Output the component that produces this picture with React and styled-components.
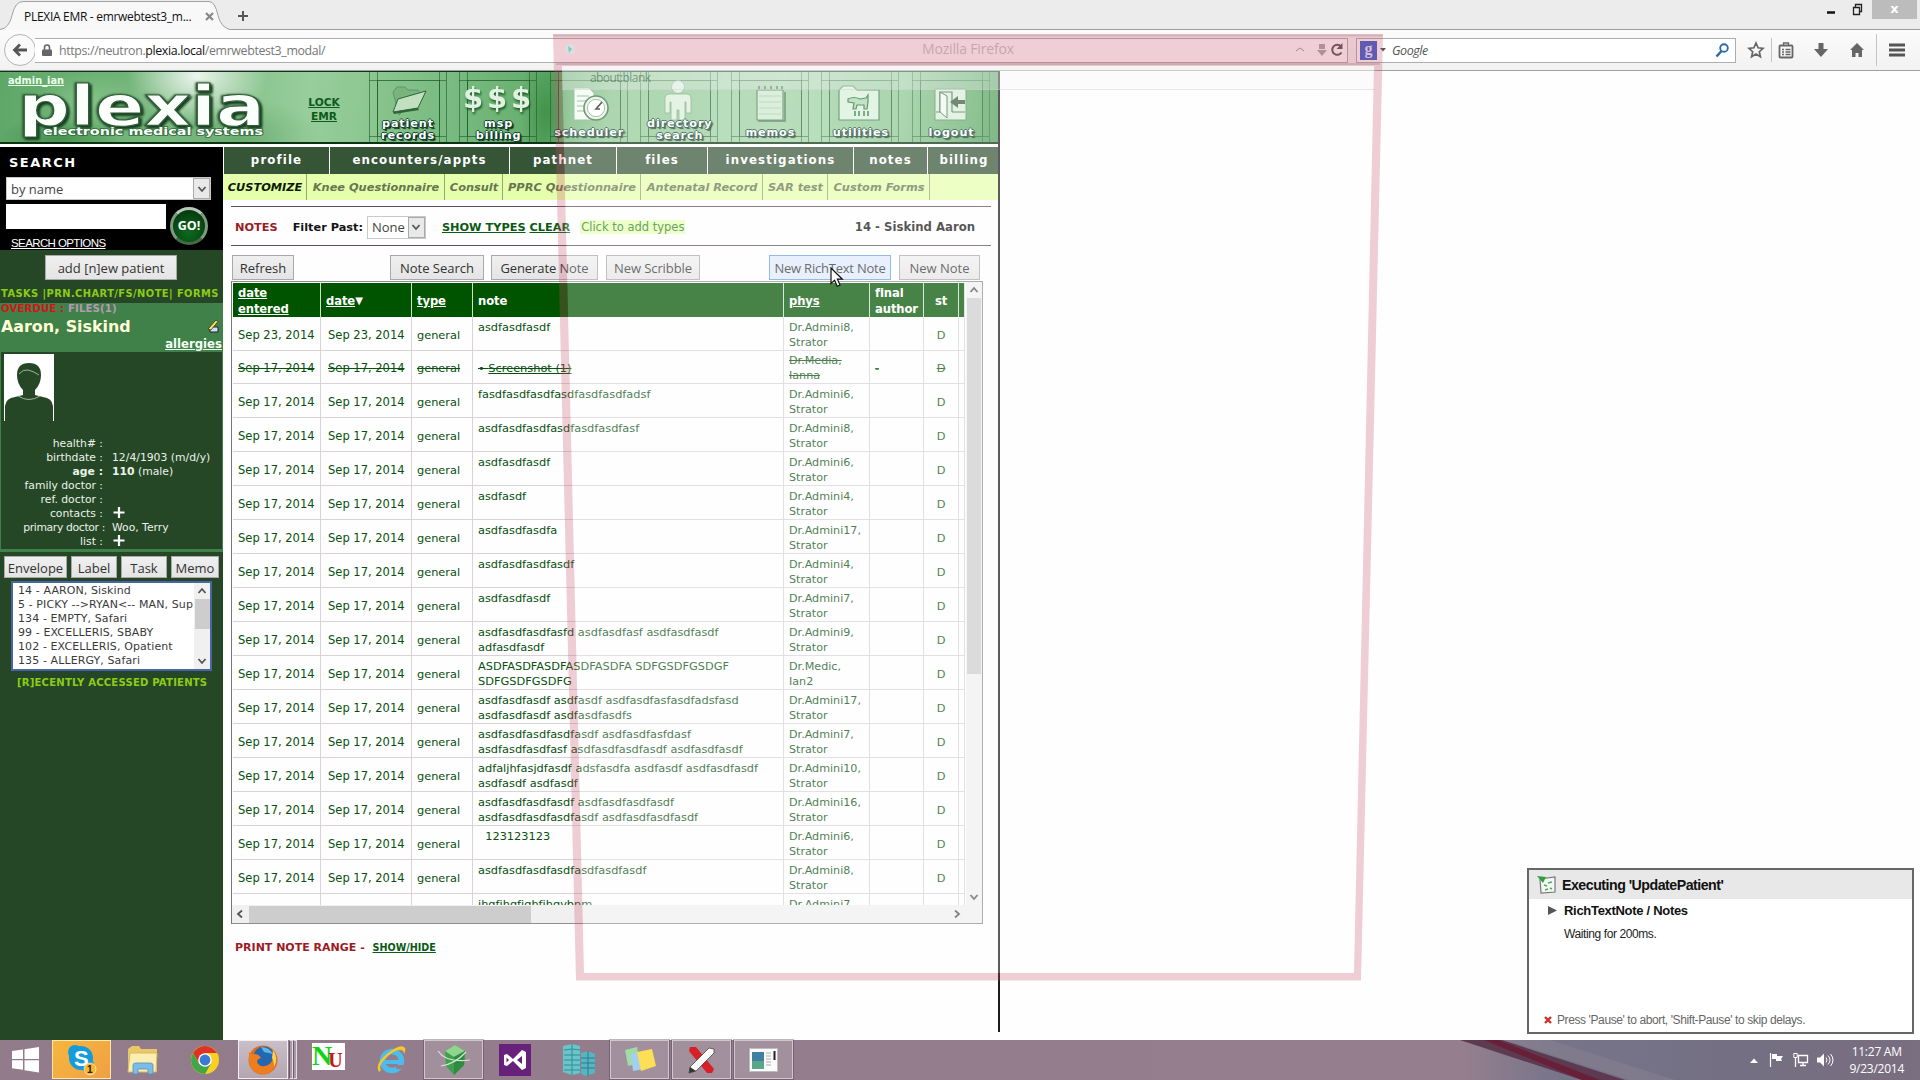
import React from "react";
import styled, { createGlobalStyle, css } from "styled-components";

const verdana = `"DejaVu Sans", Verdana, sans-serif`;
const segoe = `"Open Sans", "Segoe UI", sans-serif`;
const arial = `"Liberation Sans", Arial, sans-serif`;

const Global = createGlobalStyle`
  * { box-sizing: border-box; }
  html, body { margin: 0; padding: 0; background: #fff; }
  body { width: 1920px; height: 1080px; overflow: hidden; font-family: ${verdana}; }
`;

const Screen = styled.div`
  position: relative;
  width: 1920px;
  height: 1080px;
  display: flex;
  flex-direction: column;
  overflow: hidden;
  white-space: nowrap;
`;

/* ---------- browser chrome ---------- */
const TabStrip = styled.div`
  height: 30px;
  flex: none;
  display: flex;
  background: #ececec;
  border-bottom: 1px solid #9c9c9c;
`;
const TabShape = styled.div`
  position: relative;
  width: 236px;
  height: 30px;
  flex: none;
`;
const TabOutline = styled.svg`
  position: absolute;
  inset: 0;
`;
const TabContent = styled.div`
  position: relative;
  display: flex;
  align-items: center;
  height: 32px;
  padding-left: 24px;
  font: 12px ${segoe};
  letter-spacing: -0.3px;
  color: #111;
  svg { margin-left: 14px; }
`;
const NewTab = styled.svg`
  margin: 10px 0 0 1px;
`;
const WindowControls = styled.div`
  margin-left: auto;
  display: flex;
  align-items: flex-start;
  padding-right: 3px;
  svg { margin-top: 3px; }
`;
const CloseButton = styled.div`
  width: 45px;
  height: 19px;
  margin-left: 9px;
  background: #bcbcbc;
  color: #fff;
  font: bold 13px/17px ${verdana};
  text-align: center;
`;
const Toolbar = styled.div`
  height: 41px;
  flex: none;
  display: flex;
  align-items: center;
  padding: 0 12px 0 4px;
  background: linear-gradient(#fbfbfb, #f2f2f2);
  border-bottom: 1px solid #a0a0a0;
`;
const BackButton = styled.div`
  width: 32px;
  height: 32px;
  flex: none;
  display: flex;
  align-items: center;
  justify-content: center;
  border: 1px solid #b5b5b5;
  border-radius: 50%;
  background: #fafafa;
`;
const AddressBar = styled.div`
  flex: none;
  width: 1313px;
  height: 25px;
  margin-left: -1px;
  display: flex;
  align-items: center;
  padding: 0 3px 0 7px;
  border: 1px solid #adadad;
  border-left: 0;
  background: #fff;
  font: 12.4px ${segoe};
  color: #777;
  b { color: #111; font-weight: 400; }
  span { margin-left: 7px; letter-spacing: -0.37px; }
`;
const AddressTools = styled.div`
  margin-left: auto;
  display: flex;
  align-items: center;
  gap: 3px;
  svg:first-child { margin-right: 9px; }
`;
const SearchField = styled.div`
  width: 380px;
  height: 25px;
  flex: none;
  margin-left: 8px;
  display: flex;
  align-items: center;
  padding: 0 5px 0 3px;
  border: 1px solid #adadad;
  background: #fff;
  i { font: italic 12.5px ${segoe}; letter-spacing: -0.45px; color: #555; margin-left: 5px; flex: 1; }
`;
const EngineBadge = styled.div`
  width: 17px;
  height: 19px;
  margin-right: 3px;
  background: #3760d0;
  color: #dfe6ff;
  font: bold 16px/15px "Liberation Serif", serif;
  text-align: center;
`;
const ToolIcon = styled.svg`
  flex: none;
  margin-left: ${(p) => p.$ml}px;
`;
const Divider = styled.div`
  width: 1px;
  height: ${(p) => p.$h}px;
  margin-left: ${(p) => p.$ml}px;
  background: #c4c4c4;
`;

/* ---------- page ---------- */
const Page = styled.div`
  height: 969px;
  flex: none;
  display: flex;
  background: #fefefe;
`;
const EmrFrame = styled.div`
  width: 1000px;
  height: 961px;
  display: flex;
  flex-direction: column;
  border-right: 2px solid #1c1c1c;
`;
const Banner = styled.header`
  height: 73px;
  flex: none;
  display: flex;
  overflow: hidden;
  border-top: 1px solid #10331a;
  border-bottom: 2px solid #0c3312;
  background:
    radial-gradient(ellipse 70px 50px at 197px 4px, rgba(255,255,255,.85), rgba(255,255,255,0)),
    radial-gradient(ellipse 60px 30px at 90px 30px, rgba(150,205,150,.6), rgba(150,205,150,0)),
    radial-gradient(ellipse 60px 22px at 60px 66px, rgba(40,120,50,.5), rgba(40,120,50,0)),
    radial-gradient(ellipse 80px 40px at 240px 66px, rgba(50,130,60,.35), rgba(50,130,60,0)),
    radial-gradient(ellipse 26px 60px at 545px 40px, rgba(30,120,40,.45), rgba(30,120,40,0)),
    linear-gradient(97deg, #5fa768 0%, #6fb376 12%, #84c089 22%, #98cd9c 31%, #8ac68f 38%, #72b67a 48%, #5fa968 55%, #8fc994 61%, #a6d6aa 78%, #8cc892 90%, #4f9e58 100%);
`;
const Logo = styled.div`
  position: relative;
  width: 296px;
  flex: none;
`;
const Wordmark = styled.text`
  font: bold 55px ${verdana};
  fill: #fbfffb;
  stroke: #345c3a;
  stroke-width: 1.2px;
  filter: drop-shadow(2px 2px 1px #16401f) drop-shadow(-1px 0 1px #2a5a33);
`;
const UserLink = styled.a`
  position: absolute;
  left: 8px;
  top: 3px;
  font: bold 9.8px ${verdana};
  color: #eaffea;
  text-decoration: underline;
`;
const LockLink = styled.a`
  width: 56px;
  flex: none;
  padding-top: 23px;
  margin-right: 16.500px;
  font: bold 10.6px/14px ${verdana};
  text-align: center;
  text-decoration: underline;
  color: #0d5a1a;
`;
const Tile = styled.a`
  position: relative;
  width: 90.6px;
  height: 70px;
  flex: none;
  > svg { display: block; }
`;
const TileCaption = styled.span`
  position: absolute;
  left: -6px;
  width: 91px;
  bottom: ${(p) => (p.$low ? 3 : 0)}px;
  font: bold 11.2px/12px ${verdana};
  letter-spacing: 0.9px;
  text-align: center;
  white-space: pre-line;
  color: #fff;
  text-shadow: 1px 1px 0 #143, -1px 0 0 #143, 1px 0 0 #143, 0 -1px 0 #143, 0 1px 0 #143, 2px 2px 1px #0a2a12;
`;
const Body = styled.div`
  flex: 1;
  min-height: 0;
  display: flex;
  margin-top: 3px;
`;

/* ---------- sidebar ---------- */
const Sidebar = styled.aside`
  width: 223px;
  height: 893px;
  flex: none;
  display: flex;
  flex-direction: column;
  background: #264726;
`;
const SearchBox = styled.section`
  height: 103px;
  padding: 8px 0 0 6px;
  background: #000;
  h2 { margin: 0 0 6px 3px; font: bold 13px/16px ${verdana}; letter-spacing: 1.5px; color: #fff; }
  a { display: block; margin: 6px 0 0 5px; font: 11.5px/16px ${arial}; letter-spacing: -0.6px; color: #fff; text-decoration: underline; }
`;
const Select = styled.div`
  width: ${(p) => p.$w}px;
  height: ${(p) => p.$h}px;
  flex: none;
  display: flex;
  align-items: center;
  justify-content: space-between;
  padding-left: 4px;
  border: 1px solid #c9c9c9;
  background: #fff;
  font: 13px ${segoe};
  color: #444;
`;
const SelectArrow = styled.div`
  width: 17px;
  height: 100%;
  display: flex;
  align-items: center;
  justify-content: center;
  border: 1px solid #aaa;
  background: #e9e9e9;
`;
const QueryRow = styled.div`
  display: flex;
  height: 25px;
  margin-top: 4px;
`;
const QueryInput = styled.div`
  width: 160px;
  height: 25px;
  background: #fff;
`;
const GoButton = styled.div`
  width: 38px;
  height: 38px;
  margin: 3px 0 0 4px;
  border-radius: 50%;
  border: 3px solid #7f9c80;
  border-top-color: #b9c9b9;
  border-bottom-color: #47684a;
  background: radial-gradient(circle at 50% 70%, #0d6a1e, #03300b);
  color: #fff;
  font: bold 12.5px/32px ${segoe};
  text-align: center;
`;
const Button = styled.button`
  width: ${(p) => p.$w}px;
  height: ${(p) => p.$h || 25}px;
  flex: none;
  padding: ${(p) => (p.$h ? 1 : 0)}px 0 0;
  margin-left: ${(p) => p.$ml || 0}px;
  border: 1px solid ${(p) => (p.$hot ? "#6da0dc" : "#a9a9a9")};
  background: ${(p) => (p.$hot ? "#dfeafc" : "linear-gradient(#f0f0f0, #e4e4e4)")};
  font: 13px ${segoe};
  letter-spacing: ${(p) => p.$ls || 0}px;
  color: #333;
  white-space: nowrap;
`;
const AddRow = styled.div`
  height: 36px;
  padding: 5px 0 0 45px;
`;
const QuickLinks = styled.div`
  height: 17px;
  padding: 1px 0 0 1px;
  font: bold 9.9px/14px ${verdana};
  letter-spacing: 0.43px;
  color: #8ccc18;
`;
const PatientCard = styled.section`
  height: 249px;
  border: 1px solid #3f8148;
  border-bottom-width: 3px;
  border-top: 0;
  display: flex;
  flex-direction: column;
`;
const PatientHead = styled.div`
  height: 49px;
  background: #3f8148;
`;
const Alerts = styled.div`
  height: 13px;
  font: bold 10.2px/11px ${verdana};
  letter-spacing: 0.1px;
  color: #d01818;
  span { color: #b49ab4; }
`;
const NameRow = styled.div`
  height: 20px;
  display: flex;
  justify-content: space-between;
  align-items: center;
  padding-right: 3px;
  font: bold 15.9px ${verdana};
  color: #ffffd8;
`;
const Allergies = styled.a`
  display: block;
  text-align: right;
  font: bold 11.7px/16px ${verdana};
  text-decoration: underline;
  color: #f4fff4;
`;
const Portrait = styled.svg`
  display: block;
  margin: 2px 0 15px 3px;
  flex: none;
`;
const Fields = styled.dl`
  margin: 0;
  display: grid;
  grid-template-columns: 102px 1fr;
  column-gap: 9px;
  grid-auto-rows: 14.1px;
  align-items: center;
  font: 10.8px ${verdana};
  color: #e9f2e9;
  dt { text-align: right; }
  dd { margin: 0; }
`;
const Label = styled.dt`
  font-weight: ${(p) => (p.$bold ? "bold" : "normal")};
  letter-spacing: ${(p) => (p.$tight ? "-0.35px" : "0")};
  transform: ${(p) => (p.$tight ? "translateX(2px)" : "none")};
`;
const ActionRow = styled.div`
  display: flex;
  gap: 4px;
  padding: 4px 0 0 4px;
`;
const RecentList = styled.div`
  width: 201px;
  height: 90px;
  margin: 3px 0 0 11px;
  display: flex;
  border: 2px solid #4a64a8;
  background: #fff;
  font: 11px/14px ${verdana};
  color: #3a3a3a;
`;
const RecentItems = styled.div`
  flex: 1;
  min-width: 0;
  padding: 1px 0 0 5px;
  letter-spacing: 0.1px;
  overflow: hidden;
`;
const VScroll = styled.div`
  width: ${(p) => p.$w}px;
  flex: none;
  display: flex;
  flex-direction: column;
  align-items: center;
  background: #f0f0f0;
  > svg { flex: none; margin: 3px 0; }
`;
const Thumb = styled.div`
  background: #cdcdcd;
  width: ${(p) => p.$w}px;
  height: ${(p) => p.$h}px;
  margin-left: ${(p) => p.$ml || 0}px;
`;
const Spacer = styled.div`
  flex: 1;
`;
const RecentLabel = styled.div`
  margin-top: 5px;
  padding-left: 17px;
  font: bold 10.1px/14px ${verdana};
  letter-spacing: 0.18px;
  color: #8ccc18;
`;

/* ---------- main column ---------- */
const Main = styled.main`
  flex: 1;
  min-width: 0;
  display: flex;
  flex-direction: column;
`;
const NavBar = styled.nav`
  height: 27px;
  flex: none;
  display: flex;
  background: #365536;
`;
const NavItem = styled.a`
  width: ${(p) => p.$w}px;
  flex: none;
  border-left: 1px solid #fff;
  font: bold 11.8px/27px ${verdana};
  letter-spacing: 1.1px;
  text-align: center;
  color: #fff;
`;
const SubNav = styled.nav`
  height: 26px;
  flex: none;
  display: flex;
  background: #e6ffad;
`;
const SubItem = styled.a`
  width: ${(p) => p.$w}px;
  flex: none;
  padding-left: 1px;
  border-right: 1px solid #97a573;
  font: italic bold 11.35px/27px ${verdana};
  text-align: center;
  color: ${(p) => (p.$active ? "#0b1a00" : "#66764f")};
`;
const FilterBar = styled.div`
  height: 40px;
  flex: none;
  margin: 6px 7px 0 8px;
  display: flex;
  align-items: center;
  padding: 2px 16px 0 4px;
  border-top: 1px solid #5c4f5e;
  border-bottom: 1px solid #5c4f5e;
  font: bold 11.3px ${verdana};
  color: #141414;
`;
const FilterLinks = styled.span`
  display: flex;
  gap: 4px;
  margin: 1px 0 0 16px;
  a { color: #0a5a14; text-decoration: underline; }
`;
const RedTitle = styled.span`
  color: #9c1b24;
  margin-right: ${(p) => p.$mr || 0}px;
`;
const FilterLabel = styled.span`
  margin: 1px 4px 0 0;
`;
const AddTypes = styled.span`
  margin-left: 10px;
  padding: 0 1px;
  font-size: 11.5px;
  font-weight: 400;
  color: #2e8018;
  background: #e6ffb8;
`;
const PatientTag = styled.span`
  margin-left: auto;
  font-size: 11.7px;
`;
const ButtonBar = styled.div`
  height: 35px;
  flex: none;
  display: flex;
  padding: 9px 0 0 9px;
`;
const TableFrame = styled.div`
  width: 752px;
  height: 643px;
  flex: none;
  margin-left: 8px;
  display: flex;
  flex-direction: column;
  border: 1px solid #8e8e8e;
  border-left-color: #777;
`;
const TableArea = styled.div`
  height: 623px;
  display: flex;
  justify-content: space-between;
`;
const TableClip = styled.div`
  width: 733px;
  overflow: hidden;
  padding: 1px 0 0 1px;
`;
const cols = "88px 91px 61px 311px 86px 54px 35px 6px";
const HeadRow = styled.div`
  display: grid;
  grid-template-columns: ${cols};
  height: 34px;
  background: #005400;
`;
const HeadCell = styled.div`
  display: flex;
  align-items: center;
  padding: 1px 0 0 5px;
  border-right: 1px solid #cfe0cf;
  font: bold 11.6px/16px ${verdana};
  letter-spacing: -0.1px;
  white-space: pre-line;
  color: #fff;
  text-decoration: ${(p) => (p.$link ? "underline" : "none")};
  ${(p) => p.$center && css`justify-content: center; padding: 1px 0 0;`}
`;
const Arrow = styled.span`
  font-size: 10px;
`;
const Row = styled.div`
  display: grid;
  grid-template-columns: ${cols};
  height: ${(p) => p.$h}px;
  border-bottom: 1px solid #d9d3d9;
  font: 11.35px/15px ${verdana};
  color: #08500f;
  text-decoration: ${(p) => (p.$struck ? "line-through" : "none")};
`;
const Cell = styled.div`
  display: flex;
  align-items: ${(p) => (p.$top ? "flex-start" : "center")};
  padding: 3px 0 0 ${(p) => p.$pl ?? 5}px;
  border-right: 1px solid #d9d3d9;
  white-space: pre-line;
  overflow: hidden;
  ${(p) => p.$date && css`font-size: 11.5px;`}
  ${(p) => p.$center && css`justify-content: center; padding-left: 0;`}
`;
const PhysCell = styled(Cell)`
  padding-top: ${(p) => (p.$raised ? 1 : 3)}px;
  font-size: 11.15px;
`;
const HScroll = styled.div`
  height: 18px;
  display: flex;
  align-items: center;
  background: #f0f0f0;
  padding: 0 20px 0 3px;
`;
const PrintRange = styled.div`
  margin: 16px 0 0 12px;
  font: bold 11px/16px ${verdana};
  a { margin-left: 4px; font-size: 9.6px; color: #0a5a14; text-decoration: underline; }
`;

/* ---------- fading popup ---------- */
const GhostWindow = styled.svg`
  position: absolute;
  left: 550px;
  top: 30px;
`;
const Pointer = styled.svg`
  position: absolute;
  left: 830px;
  top: 267px;
`;

/* ---------- status popup ---------- */
const Toast = styled.section`
  position: absolute;
  left: 1527px;
  top: 868px;
  width: 387px;
  height: 166px;
  display: flex;
  flex-direction: column;
  border: 2px solid #666;
  background: #fff;
  font: 12px ${arial};
  letter-spacing: -0.4px;
  color: #222;
`;
const ToastTitle = styled.div`
  height: 29px;
  display: flex;
  align-items: center;
  gap: 6px;
  padding-left: 8px;
  background: #e8e8e8;
  font: bold 14.2px ${arial};
  letter-spacing: -0.5px;
  color: #111;
`;
const ToastStep = styled.div`
  display: flex;
  align-items: center;
  height: 22px;
  gap: 7px;
  padding-left: 19px;
  font: bold 13px ${arial};
  letter-spacing: -0.3px;
  color: #111;
`;
const ToastText = styled.div`
  padding: 5px 0 0 35px;
  line-height: 16px;
`;
const ToastHint = styled.div`
  margin-top: auto;
  display: flex;
  align-items: center;
  gap: 5px;
  height: 24px;
  padding-left: 15px;
  letter-spacing: -0.4px;
  color: #666;
`;

/* ---------- taskbar ---------- */
const Taskbar = styled.footer`
  height: 40px;
  flex: none;
  display: flex;
  align-items: stretch;
  background: linear-gradient(90deg, #927c8b 0, #957f8e 1460px, #77748a 1560px, #746f82 1750px, #7a6e80 100%);
`;
const Backdrop = styled.svg`
  position: absolute;
  left: 1440px;
  top: 1040px;
`;
const TaskSlot = styled.div`
  width: ${(p) => p.$w}px;
  height: 39px;
  margin-right: ${(p) => p.$mr || 0}px;
  flex: none;
  display: flex;
  align-items: center;
  justify-content: center;
  ${(p) => p.$open && css`border: 1px solid #d2c6ce; background: rgba(255,255,255,.14); box-shadow: 0 0 0 1px rgba(70,50,65,.35);`}
  ${(p) => p.$active && css`border: 1px solid #f3eef2; background: linear-gradient(#c9bfc8, #b3a6b1);`}
  ${(p) => p.$alert && css`border: 1px solid #ffe7ae; background: linear-gradient(135deg, #f6b73c, #f0a045);`}
`;
const StackEdge = styled.div`
  width: 4px;
  height: 39px;
  margin-left: ${(p) => p.$ml || 0}px;
  border: 1px solid #e5dde3;
  border-left-color: #6b5a67;
  background: #a999a6;
`;
const NuBadge = styled.div`
  width: 33px;
  height: 27px;
  margin-bottom: 6px;
  display: flex;
  background: #fff;
  font: bold 28px/25px "Liberation Serif", serif;
  color: #0fd416;
  span { font-size: 20px; line-height: 35px; margin-left: -4px; color: #d01414; }
`;
const Tray = styled.div`
  position: relative;
  margin-left: auto;
  display: flex;
  align-items: center;
  gap: 8px;
  padding-right: 16px;
`;
const Clock = styled.div`
  margin-left: 7px;
  font: 12px/17px ${segoe};
  letter-spacing: -0.25px;
  text-align: center;
  color: #fff;
`;

/* ---------- icons ---------- */
const turns = { down: 0, up: 180, left: 90, right: -90 };
const Chevron = ({ d = "down" }) => (
  <svg width="10" height="10" viewBox="0 0 10 10">
    <path d="M1.500 3l3.500 4 3.500-4" fill="none" stroke="#555" strokeWidth="1.800" transform={`rotate(${turns[d]} 5 5)`} />
  </svg>
);

const Dollar = styled.text`
  font: bold 29px ${verdana};
  fill: #e0f2df;
  filter: drop-shadow(1px 2px 1px #1d5a2a);
`;

const tileArt = {
  folder: (
    <g>
      <path d="M24 20l4-5 8 0 3 3 10 0 3 5-22 20z" fill="#79b37e" stroke="#5c9a64" />
      <path d="M24 40l5-13 28-8-8 17z" fill="#c2dfc0" stroke="#2f6438" strokeWidth="1" />
      <path d="M24 40l25-4 1 2-25 4z" fill="#2f6438" />
    </g>
  ),
  dollars: (
    <g>
      <Dollar x="4" y="36">$</Dollar>
      <Dollar x="28" y="36">$</Dollar>
      <Dollar x="52" y="36">$</Dollar>
    </g>
  ),
  scheduler: (
    <g>
      <path d="M24 16h15l5 5v27H24z" fill="#f2faf2" stroke="#7fae84" />
      <path d="M27 24h12M27 29h9M27 34h8M27 39h8" stroke="#7fae84" />
      <circle cx="46" cy="36" r="12" fill="#e5f2e5" stroke="#3f6f46" strokeWidth="1.600" />
      <circle cx="46" cy="36" r="8.600" fill="#fff" stroke="#86ac8a" />
      <path d="M52 30l-6 7h4" fill="none" stroke="#222" strokeWidth="1.600" />
    </g>
  ),
  person: (
    <g fill="#dcefdc" stroke="#6ea375" strokeWidth=".8">
      <circle cx="38" cy="15" r="6.500" />
      <path d="M25 26q0-4 4-4h18q4 0 4 4v15h-5V30h-1v18h-6V38h-2v10h-6V30h-1v11h-5z" />
    </g>
  ),
  memo: (
    <g>
      <path d="M26 18h26v30H26z" fill="#cfe8cf" stroke="#4f8458" strokeWidth="1.200" />
      <path d="M28 24h22M28 30h22M28 36h22M28 42h22" stroke="#a5cfa8" />
      <path d="M28 14v3M34 14v3M40 14v3M46 14v3M51 14v3" stroke="#2f6438" strokeWidth="1.800" />
      <path d="M27 49h27V20" fill="none" stroke="#3f7448" strokeWidth="1.500" />
    </g>
  ),
  utilities: (
    <g>
      <path d="M18 48V18l4-4h10l4 4h22v30z" fill="#d7f0d8" stroke="#3f7f4a" strokeWidth="1.200" />
      <path d="M27 27q6-3 12 0l6-1 2-3v7l-1 7h-3v-4h-7l-1 4h-3l1-6-6-1z" fill="#a9d8ae" stroke="#2f6f3a" strokeWidth="1.200" />
      <path d="M34 39v5M38 39v5M43 39v5M47 39v5" stroke="#2f6f3a" strokeWidth="1.600" />
    </g>
  ),
  logout: (
    <g>
      <path d="M23 17h31v31H23z" fill="#d9efd9" stroke="#5c8f62" />
      <path d="M28 40V20h12v20" fill="none" stroke="#4d6f52" strokeWidth="1.200" />
      <path d="M28 20l7 4v22l-7-6zM24 40h4M40 40h13" fill="#eefaee" stroke="#4d6f52" />
      <path d="M38 30l8-6v4h7v4h-7v4z" fill="#3b5c40" />
    </g>
  ),
};

const TileFrame = ({ art }) => (
  <svg width="78" height="70" viewBox="0 0 78 70">
    <rect x="8.500" y="8.500" width="62" height="56" fill="rgba(120,190,125,.18)" stroke="#1f5a2a" strokeOpacity=".75" />
    <path d="M.5 0v70M77.500 0v70M0 8.500h8M70 8.500h7M0 64.500h8M70 64.500h7M8.500 0v70M70.500 0v70" stroke="#1f5a2a" strokeOpacity=".6" fill="none" />
    {tileArt[art]}
  </svg>
);

const tiles = [
  ["folder", "patient\nrecords"],
  ["dollars", "msp\nbilling"],
  ["scheduler", "scheduler"],
  ["person", "directory\nsearch"],
  ["memo", "memos"],
  ["utilities", "utilities"],
  ["logout", "logout"],
];

const nav = [["profile", 106], ["encounters/appts", 180], ["pathnet", 107], ["files", 91], ["investigations", 146], ["notes", 74], ["billing", 73]];
const sub = [["CUSTOMIZE", 84], ["Knee Questionnaire", 138], ["Consult", 58], ["PPRC Questionnaire", 138], ["Antenatal Record", 122], ["SAR test", 65], ["Custom Forms", 102]];

const fields = [
  ["health# :", ""],
  ["birthdate :", "12/4/1903 (m/d/y)"],
  ["age :", <><b>110</b> (male)</>],
  ["family doctor :", ""],
  ["ref. doctor :", ""],
  ["contacts :", "+"],
  ["primary doctor :", "Woo, Terry"],
  ["list :", "+"],
];

const recents = ["14 - AARON, Siskind", "5 - PICKY -->RYAN<-- MAN, Sup", "134 - EMPTY, Safari", "99 - EXCELLERIS, SBABY", "102 - EXCELLERIS, Opatient", "135 - ALLERGY, Safari"];

const notes = [
  ["asdfasdfasdf", "Dr.Admini8,\nStrator"],
  ["", "Dr.Media,\nIanna"],
  ["fasdfasdfasdfasdfasdfasdfadsf", "Dr.Admini6,\nStrator"],
  ["asdfasdfasdfasdfasdfasdfasf", "Dr.Admini8,\nStrator"],
  ["asdfasdfasdf", "Dr.Admini6,\nStrator"],
  ["asdfasdf", "Dr.Admini4,\nStrator"],
  ["asdfasdfasdfa", "Dr.Admini17,\nStrator"],
  ["asdfasdfasdfasdf", "Dr.Admini4,\nStrator"],
  ["asdfasdfasdf", "Dr.Admini7,\nStrator"],
  ["asdfasdfasdfasfd asdfasdfasf asdfasdfasdf\nadfasdfasdf", "Dr.Admini9,\nStrator"],
  ["ASDFASDFASDFASDFASDFA SDFGSDFGSDGF\nSDFGSDFGSDFG", "Dr.Medic,\nIan2"],
  ["asdfasdfasdf asdfasdf asdfasdfasfasdfadsfasd\nasdfasdfasdf asdfasdfasdfs", "Dr.Admini17,\nStrator"],
  ["asdfasdfasdfasdfasdf asdfasdfasfdasf\nasdfasdfasdfasf asdfasdfasdfasdf asdfasdfasdf", "Dr.Admini7,\nStrator"],
  ["adfaljhfasjdfasdf adsfasdfa asdfasdf asdfasdfasdf\nasdfasdf asdfasdf", "Dr.Admini10,\nStrator"],
  ["asdfasdfasdfasdf asdfasdfasdfasdf\nasdfasdfasdfasdfasdf asdfasdfasdfasdf", "Dr.Admini16,\nStrator"],
  ["\u00a0\u00a0123123123", "Dr.Admini6,\nStrator"],
  ["asdfasdfasdfasdfasdfasdfasdf", "Dr.Admini8,\nStrator"],
  ["jhgfjhgfjghfjhgvbnm", "Dr.Admini7\nStrator"],
];

const NoteRow = ({ note, phys, index }) => {
  const struck = index === 1;
  const last = index === notes.length - 1;
  const date = last ? "" : index === 0 ? "Sep 23, 2014" : "Sep 17, 2014";
  return (
    <Row $h={struck ? 33 : 34} $struck={struck}>
      <Cell $date>{date}</Cell>
      <Cell $date $pl={7}>{date}</Cell>
      <Cell>{last ? "" : "general"}</Cell>
      {struck ? <Cell><span>• <u>Screenshot (1)</u></span></Cell> : <Cell $top>{note}</Cell>}
      <PhysCell $raised={struck}>{phys}</PhysCell>
      <Cell>{struck ? "-" : ""}</Cell>
      <Cell $center>{last ? "" : "D"}</Cell>
      <Cell>{struck ? "-" : ""}</Cell>
    </Row>
  );
};

const App = () => (
  <>
    <Global />
    <Screen>
      <TabStrip>
        <TabShape>
          <TabOutline width="236" height="30">
            <path d="M0 29.500q9-1 12-14Q15 1.500 23 1.500H209q6 0 9 14 3 13 14 14.500V31H0z" fill="#f8f8f8" stroke="#a2a2a2" />
          </TabOutline>
          <TabContent>
            PLEXIA EMR - emrwebtest3_m...
            <svg width="9" height="9"><path d="M1 1l7 7M8 1l-7 7" stroke="#888" strokeWidth="2.200" /></svg>
          </TabContent>
        </TabShape>
        <NewTab width="12" height="12"><path d="M6 1v10M1 6h10" stroke="#555" strokeWidth="2" /></NewTab>
        <WindowControls>
          <svg width="36" height="14">
            <path d="M0 9.500h8" stroke="#111" strokeWidth="2.500" />
            <path d="M26.500 4.500h6v7h-6zM28.500 4v-2.500h6v7h-2" fill="none" stroke="#222" strokeWidth="1.300" />
          </svg>
          <CloseButton>x</CloseButton>
        </WindowControls>
      </TabStrip>
      <Toolbar>
        <BackButton>
          <svg width="16" height="14"><path d="M15 7H3M8 1.500L2.500 7l5.500 5.500" fill="none" stroke="#555" strokeWidth="2.800" /></svg>
        </BackButton>
        <AddressBar>
          <svg width="10" height="12"><path d="M2.500 6V3.500a2.500 2.500 0 015 0V6" fill="none" stroke="#666" strokeWidth="1.600" /><rect x="0" y="5.500" width="10" height="6.500" rx="1" fill="#666" /></svg>
          <span>https://neutron.<b>plexia.local</b>/emrwebtest3_modal/</span>
          <AddressTools>
            <svg width="10" height="8"><path d="M1 5l4-3 4 3" fill="none" stroke="#999" /></svg>
            <svg width="10" height="14"><path d="M2 1h6v5H2zM0 7h10l-5 6z" fill="#aaa" /></svg>
            <svg width="14" height="14"><path d="M11.500 9.500a5 5 0 11-.5-6" fill="none" stroke="#555" strokeWidth="2" /><path d="M12.500 0v6h-6z" fill="#555" /></svg>
          </AddressTools>
        </AddressBar>
        <SearchField>
          <EngineBadge>g</EngineBadge>
          <svg width="7" height="4"><path d="M0 0h6l-3 3.500z" fill="#555" /></svg>
          <i>Google</i>
          <svg width="15" height="15"><circle cx="9" cy="5" r="3.800" fill="none" stroke="#2f6aa8" strokeWidth="1.900" /><path d="M6.500 8L1.500 13.500" stroke="#2f6aa8" strokeWidth="2.600" /></svg>
        </SearchField>
        <ToolIcon $ml={11} width="18" height="18"><path d="M9 2l2.100 4.800 5 .5-3.800 3.400 1.100 5L9 13.100 4.600 15.700l1.100-5L1.900 7.300l5-.5z" fill="none" stroke="#666" strokeWidth="1.700" /></ToolIcon>
        <Divider $ml={6} $h={24} />
        <ToolIcon $ml={6} width="16" height="17"><rect x="1.500" y="3.500" width="13" height="12" rx="1" fill="none" stroke="#666" strokeWidth="1.800" /><path d="M5.500 3V1h5v2M4 7.500h2M7.500 7.500h5M4 10h2M7.500 10h5M4 12.500h2M7.500 12.500h5" fill="none" stroke="#666" strokeWidth="1.300" /></ToolIcon>
        <ToolIcon $ml={19} width="16" height="16"><path d="M5.500 1h5v6H15l-7 8-7-8h4.500z" fill="#666" /></ToolIcon>
        <ToolIcon $ml={20} width="16" height="16"><path d="M8 1l7 7h-2v7H9.500v-4h-3v4H3V8H1z" fill="#666" /></ToolIcon>
        <Divider $ml={11} $h={32} />
        <ToolIcon $ml={12} width="16" height="14"><path d="M0 2h16M0 7h16M0 12h16" stroke="#555" strokeWidth="2.800" /></ToolIcon>
      </Toolbar>

      <Page>
        <EmrFrame>
          <Banner>
            <Logo>
              <svg width="296" height="70">
                <Wordmark x="18" y="53" textLength="247" lengthAdjust="spacingAndGlyphs">plexia</Wordmark>
                <text x="43" y="63" fontFamily="DejaVu Sans" fontWeight="bold" fontSize="10.500" textLength="220" lengthAdjust="spacingAndGlyphs" fill="#fff" stroke="#2c6a36" strokeWidth="1.600" paintOrder="stroke">electronic medical systems</text>
              </svg>
              <UserLink>admin_ian</UserLink>
            </Logo>
            <LockLink>LOCK<br />EMR</LockLink>
            {tiles.map(([art, caption]) => (
              <Tile key={art}>
                <TileFrame art={art} />
                <TileCaption $low={!caption.includes("\n")}>{caption}</TileCaption>
              </Tile>
            ))}
          </Banner>
          <Body>
            <Sidebar>
              <SearchBox>
                <h2>SEARCH</h2>
                <Select $w={205} $h={23}>by name<SelectArrow><Chevron /></SelectArrow></Select>
                <QueryRow>
                  <QueryInput />
                  <GoButton>GO!</GoButton>
                </QueryRow>
                <a>SEARCH OPTIONS</a>
              </SearchBox>
              <AddRow><Button $w={132}>add [n]ew patient</Button></AddRow>
              <QuickLinks>TASKS |PRN.CHART/FS/NOTE| FORMS</QuickLinks>
              <PatientCard>
                <PatientHead>
                  <Alerts>OVERDUE : <span>FILES(1)</span></Alerts>
                  <NameRow>
                    Aaron, Siskind
                    <svg width="12" height="14"><path d="M3 8h8v5H3z" fill="#cfe0ff" stroke="#223" /><path d="M1 10L9 1l2 1.500L4 11z" fill="#ffe35a" stroke="#332" strokeWidth=".8" /></svg>
                  </NameRow>
                  <Allergies>allergies</Allergies>
                </PatientHead>
                <Portrait width="50" height="67" viewBox="0 0 50 67">
                  <rect width="50" height="67" fill="#fff" />
                  <path d="M1 67V52q1-8 10-9l8-2v-5q-6-6-6-15 0-12 12-12t12 12q0 9-6 15v5l8 2q9 1 10 9v15z" fill="#264726" />
                  <path d="M15 20q4-5 9-4t11 5M14 42q11 7 22 0" fill="none" stroke="#9ab59a" strokeWidth="1" />
                </Portrait>
                <Fields>
                  {fields.map(([label, value]) => (
                    <React.Fragment key={label}>
                      <Label $bold={label === "age :"} $tight={label.startsWith("primary")}>{label}</Label>
                      <dd>{value === "+" ? <svg width="13" height="11"><path d="M7 0v11M1.500 5.500h11" stroke="#fff" strokeWidth="2.200" /></svg> : value}</dd>
                    </React.Fragment>
                  ))}
                </Fields>
              </PatientCard>
              <ActionRow>
                <Button $w={63} $h={22}>Envelope</Button>
                <Button $w={46} $h={22}>Label</Button>
                <Button $w={46} $h={22}>Task</Button>
                <Button $w={48} $h={22}>Memo</Button>
              </ActionRow>
              <RecentList>
                <RecentItems>{recents.map((r) => <div key={r}>{r}</div>)}</RecentItems>
                <VScroll $w={16}>
                  <Chevron d="up" />
                  <Thumb $w={15} $h={30} />
                  <Spacer />
                  <Chevron />
                </VScroll>
              </RecentList>
              <RecentLabel>[R]ECENTLY ACCESSED PATIENTS</RecentLabel>
            </Sidebar>

            <Main>
              <NavBar>{nav.map(([t, w]) => <NavItem key={t} $w={w}>{t}</NavItem>)}</NavBar>
              <SubNav>{sub.map(([t, w], i) => <SubItem key={t} $w={w} $active={i === 0}>{t}</SubItem>)}</SubNav>
              <FilterBar>
                <RedTitle $mr={15}>NOTES</RedTitle>
                <FilterLabel>Filter Past:</FilterLabel>
                <Select $w={59} $h={23}>None<SelectArrow><Chevron /></SelectArrow></Select>
                <FilterLinks>
                  <a>SHOW TYPES</a>
                  <a>CLEAR</a>
                </FilterLinks>
                <AddTypes>Click to add types</AddTypes>
                <PatientTag>14 - Siskind Aaron</PatientTag>
              </FilterBar>
              <ButtonBar>
                <Button $w={62}>Refresh</Button>
                <Button $w={94} $ml={96}>Note Search</Button>
                <Button $w={107} $ml={7} $ls={-0.1}>Generate Note</Button>
                <Button $w={94} $ml={8} $ls={-0.1}>New Scribble</Button>
                <Button $w={122} $ml={69} $ls={-0.22} $hot>New RichText Note</Button>
                <Button $w={81} $ml={8}>New Note</Button>
              </ButtonBar>
              <TableFrame>
                <TableArea>
                  <TableClip>
                    <HeadRow>
                      <HeadCell $link>{"date\nentered"}</HeadCell>
                      <HeadCell><u>date</u><Arrow>▼</Arrow></HeadCell>
                      <HeadCell $link>type</HeadCell>
                      <HeadCell>note</HeadCell>
                      <HeadCell $link>phys</HeadCell>
                      <HeadCell>{"final\nauthor"}</HeadCell>
                      <HeadCell $center>st</HeadCell>
                      <HeadCell />
                    </HeadRow>
                    {notes.map(([note, phys], i) => <NoteRow key={i} index={i} note={note} phys={phys} />)}
                  </TableClip>
                  <VScroll $w={16}>
                    <Chevron d="up" />
                    <Thumb $w={14} $h={376} />
                    <Spacer />
                    <Chevron />
                  </VScroll>
                </TableArea>
                <HScroll>
                  <Chevron d="left" />
                  <Thumb $w={282} $h={17} $ml={4} />
                  <Spacer />
                  <Chevron d="right" />
                </HScroll>
              </TableFrame>
              <PrintRange><RedTitle>PRINT NOTE RANGE - </RedTitle><a>SHOW/HIDE</a></PrintRange>
            </Main>
          </Body>
        </EmrFrame>
      </Page>

      <Taskbar>
        <Backdrop width="480" height="40">
          <path d="M20 0H62L185 40H142z" fill="#5d3a50" />
          <path d="M44 0H58L160 40H142z" fill="#682038" />
          <path d="M66 0H110L235 40H190z" fill="#85808f" opacity=".6" />
        </Backdrop>
        <TaskSlot $w={52}>
          <svg width="28" height="26"><path d="M0 4l11-1.600V12H0zM12.500 2.200L27 0v12H12.500zM0 13.300h11v9.500L0 21.300zM12.500 13.300H27V25.500l-14.500-2.200z" fill="#fff" /></svg>
        </TaskSlot>
        <TaskSlot $w={59} $alert>
          <svg width="32" height="32">
            <circle cx="15" cy="14" r="12" fill="#159bdc" /><circle cx="9" cy="8" r="7" fill="#159bdc" /><circle cx="21" cy="21" r="7" fill="#159bdc" />
            <text x="8" y="22" fontFamily="Liberation Sans" fontWeight="bold" fontSize="22" fill="#fff">S</text>
            <circle cx="24" cy="25" r="6" fill="#fdb92c" stroke="#fff" strokeWidth=".6" />
            <text x="21" y="29" fontFamily="Liberation Sans" fontWeight="bold" fontSize="10" fill="#222">1</text>
          </svg>
        </TaskSlot>
        <TaskSlot $w={64}>
          <svg width="34" height="30"><path d="M2 4l4-3h7l2 3h16v23H2z" fill="#e9c869" /><path d="M4 8h27l-1 19H2z" fill="#fbeeb2" stroke="#dcb95a" /><path d="M7 29V20q0-2 3-2h14q3 0 3 2v9h-5v-5H12v5z" fill="#7dbce6" stroke="#4d90c4" strokeWidth=".8" /></svg>
        </TaskSlot>
        <TaskSlot $w={60} $mr={3}>
          <svg width="30" height="30" viewBox="-15 -15 30 30">
            <circle r="14" fill="#f9cf23" /><path d="M0-7H12.100A14 14 0 00-12.100-7L-6 3z" fill="#dc3326" />
            <path d="M-12.100-7A14 14 0 000 14L6 3.500-6 3.500z" fill="#3fa748" /><circle r="6.800" fill="#fff" /><circle r="5.400" fill="#3b79d4" />
          </svg>
        </TaskSlot>
        <TaskSlot $w={50} $active>
          <svg width="32" height="32"><circle cx="16" cy="16" r="14.500" fill="#e66a18" /><circle cx="17" cy="13" r="10.500" fill="#2268b0" /><path d="M14 3q8 0 12 7l-9-2z" fill="#5db7ea" /><path d="M2 8q2 2 5 2 5 0 7 4-4 1-4 4 2 5 8 4 8-2 8-10 3 4 2 9-3 9-12 9Q4 30 2 18z" fill="#ef7d1e" /><path d="M26 6q6 8 1 17 0-6-2-9z" fill="#fbd34a" /></svg>
        </TaskSlot>
        <StackEdge $ml={1} />
        <StackEdge />
        <TaskSlot $w={63}><NuBadge>N<span>U</span></NuBadge></TaskSlot>
        <TaskSlot $w={64}>
          <svg width="32" height="32"><circle cx="16" cy="17" r="9.500" fill="none" stroke="#4cbcec" strokeWidth="5.500" /><path d="M8 18h19" stroke="#4cbcec" strokeWidth="4" /><path d="M20 21h9v4h-9z" fill="#957f8e" /><path d="M3 28Q-2 20 12 9 25-1 29 4q1 2-1 6 0-4-4-4-6 0-14 8T5 26z" fill="#f6c62e" /></svg>
        </TaskSlot>
        <TaskSlot $w={59} $open>
          <svg width="34" height="32"><path d="M8 7L18 1l10 6-1 14-10 10-8-9z" fill="#3fa04c" /><path d="M8 7L18 1l10 6-11 6z" fill="#8fd48f" /><path d="M17 13l11-6-1 14-10 10z" fill="#2f8b3e" /><path d="M1 7q8 12 32 9M4 22q14-2 25-14" fill="none" stroke="#d5e5d8" strokeWidth="1.200" /></svg>
        </TaskSlot>
        <TaskSlot $w={64}>
          <svg width="32" height="32"><rect width="32" height="32" fill="#68217a" /><path d="M5 11l3-1 6 5 9-9 4 2v16l-4 2-9-9-6 5-3-1zM7.500 13.500v5l2.500-2.500zM23 12l-5 4 5 4z" fill="#fff" fillRule="evenodd" /></svg>
        </TaskSlot>
        <TaskSlot $w={63}>
          <svg width="34" height="34"><path d="M1 3l9-2 8 2v27l-8 2-9-3z" fill="#6cc3c8" /><path d="M10 1v31M2 7l8-1 8 1M2 12h16M2 17h16M2 22h16M2 27h16" stroke="#2f8f99" fill="none" /><path d="M19 10l7-2 7 3v19l-9 3-5-2z" fill="#58b4be" /><path d="M26 8v25M19 15h14M19 20h14M19 25h14" stroke="#2a7f8c" fill="none" /></svg>
        </TaskSlot>
        <TaskSlot $w={59} $open $mr={3}>
          <svg width="34" height="28"><path d="M2 4l12-3 3 16-12 3z" fill="#9fdca8" /><path d="M8 8l10-2 3 17-11 2z" fill="#a4cff0" /><path d="M14 6l15-3 4 17-15 5z" fill="#fbe056" /></svg>
        </TaskSlot>
        <TaskSlot $w={59} $open $mr={3}>
          <svg width="30" height="30"><path d="M3 2h6L27 24l-2 4h-5L2 6z" fill="#d81f26" /><path d="M22 3l5 1v4L9 26l-7 2 1-6z" fill="#fafafa" stroke="#333" strokeWidth=".7" /><path d="M3 22l-1 6 7-2z" fill="#333" /></svg>
        </TaskSlot>
        <TaskSlot $w={59} $open>
          <svg width="30" height="26"><rect x=".5" y="1.500" width="28" height="23" fill="#fbfbfb" stroke="#bbb" /><path d="M3 5h12v17H3z" fill="#3f7fa0" /><path d="M3 14h12v8H3z" fill="#5aa58c" /><path d="M17 6h5M17 9h5M17 12h5M17 15h5M17 18h5" stroke="#aaa" /><path d="M25.500 4v9" stroke="#222" strokeWidth="2" /></svg>
        </TaskSlot>
        <Tray>
          <svg width="8" height="5"><path d="M0 5l4-4.500L8 5z" fill="#fff" /></svg>
          <svg width="19" height="16"><path d="M4.500 1v14" stroke="#fff" strokeWidth="1.200" /><path d="M6 2h5v2h6l-2 3 1 2h-6V7H6z" fill="#fff" /></svg>
          <svg width="16" height="16"><path d="M5.500 3.500h9v7h-9zM7 13.500h6M10 11v2M2.500 6v9" fill="none" stroke="#fff" strokeWidth="1.300" /><path d="M.8 1.500h3.400v4H.8z" fill="none" stroke="#fff" /></svg>
          <svg width="17" height="16"><path d="M0 5.500h3l4-4v13l-4-4H0z" fill="#fff" /><path d="M9 5.500q2 2.500 0 5M11 3.500q4 4.500 0 9M13.500 2q5 6 0 12" fill="none" stroke="#fff" /></svg>
          <Clock>11:27 AM<br />9/23/2014</Clock>
        </Tray>
      </Taskbar>

      <GhostWindow width="840" height="955" viewBox="550 30 840 955">
        <path d="M562 66H1375L1354 973H584z" fill="#fff" fillOpacity=".28" />
        <path d="M562 66H1375V89H562z" fill="#f4f4f8" fillOpacity=".3" />
        <path d="M562 89.500H1375" stroke="#d6d6da" strokeOpacity=".6" />
        <path d="M553 34H1383L1361 980.500H576zM562 66L584 973H1354L1374 66z" fill="#c85068" fillOpacity=".28" fillRule="evenodd" />
        <path d="M553 35.500H1383M556 64H1380" stroke="#9a7078" strokeOpacity=".3" strokeWidth="2" fill="none" />
        <circle cx="570" cy="49" r="5" fill="#d9dfe2" /><path d="M568 46l4 3-3 4z" fill="#8fc0b8" />
        <text x="922" y="54" fontFamily="Open Sans" fontSize="14" textLength="92" fill="#a58c92" fillOpacity=".6">Mozilla Firefox</text>
        <text x="590" y="82" fontFamily="Open Sans" fontSize="12" textLength="61" fill="#1d4a2a" fillOpacity=".5">about:blank</text>
      </GhostWindow>

      <Pointer width="14" height="21"><path d="M1 1v15.500l3.600-3.300 2.600 6 2.800-1.200-2.600-5.800h5z" fill="#fff" stroke="#111" strokeWidth="1.200" /></Pointer>

      <Toast>
        <ToastTitle>
          <svg width="19" height="18"><path d="M3 3l15-2v15L4 17z" fill="#f4f8f4" stroke="#777" strokeWidth="1.200" /><path d="M0 0l9 1-3 6z" fill="#2fa03c" /><path d="M7 9l3 1M11 7l4-1M8 14l3-1M13 12l2 1" stroke="#4fae5a" strokeWidth="1.500" /></svg>
          Executing 'UpdatePatient'
        </ToastTitle>
        <ToastStep>
          <svg width="9" height="9"><path d="M0 0l9 4.500L0 9z" fill="#555" /></svg>
          RichTextNote / Notes
        </ToastStep>
        <ToastText>Waiting for 200ms.</ToastText>
        <ToastHint>
          <svg width="8" height="8"><path d="M1 1l6 6M7 1L1 7" stroke="#d03028" strokeWidth="2.400" /></svg>
          Press 'Pause' to abort, 'Shift-Pause' to skip delays.
        </ToastHint>
      </Toast>
    </Screen>
  </>
);

export default App;
